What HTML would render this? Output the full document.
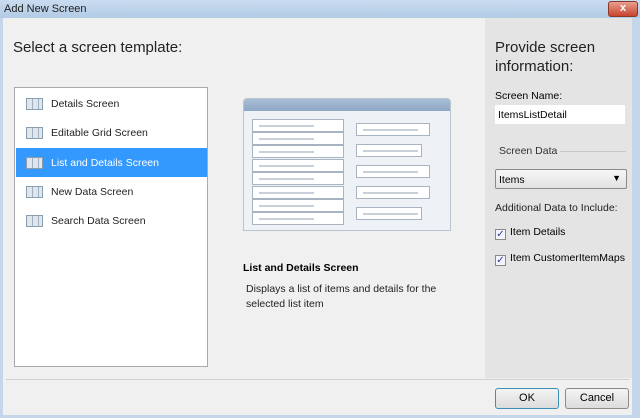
<!DOCTYPE html>
<html><head><style>
*{margin:0;padding:0;box-sizing:border-box}
body{width:640px;height:418px;overflow:hidden;font-family:"Liberation Sans",sans-serif;background:#c4d6ea;position:relative;font-size:10.5px;color:#000}
.abs{position:absolute}
.title{left:0;top:0;width:640px;height:18px;background:linear-gradient(#c9dcf0,#b3cbe6);font-size:11px;padding:3px 4px;color:#1e1e1e}
.close{left:608px;top:1px;width:30px;height:16px;border-radius:3px;background:linear-gradient(#e8a08e,#c8442e);border:1px solid #8a3a2a;color:#fff;font-weight:bold;text-align:center;font-size:11px;line-height:13px}
.main{left:3px;top:18px;width:629px;height:397px;background:#f0f0f0}
.right{left:485px;top:18px;width:147px;height:360px;background:#e4e4e4}
.list{left:14px;top:87px;width:194px;height:280px;background:#fff;border:1px solid #a9a9a9}
.item{position:absolute;left:1px;width:191px;height:29px;line-height:31px;padding-left:35px;font-size:10.5px;color:#222}
.item i{position:absolute;left:10px;top:9px;width:17px;height:12px;border:1px solid #8a9cb0;background:repeating-linear-gradient(90deg,#dfe6ee 0 5px,#9fb0c2 5px 6px),#dfe6ee}
.sel{background:#3399ff;color:#fff}
.chk{display:inline-block;width:11px;height:11px;border:1px solid #8a8a8a;background:#f4f4ff;vertical-align:-2px;margin-right:4px;font-size:10px;line-height:9px;color:#2a3a9a;text-align:center}
.btn{height:21px;border:1px solid #8a8a8a;border-radius:3px;background:linear-gradient(#f4f4f4,#dcdcdc);text-align:center;line-height:19px;font-size:11px}
.row{position:absolute;left:8px;width:92px;height:13px;border:1px solid #a8b4c2;background:#fff}
.row::after{content:"";position:absolute;left:6px;top:5px;width:55px;height:2px;background:#c8d0da}
</style></head><body>
<div class="abs title">Add New Screen</div>
<div class="abs close">x</div>
<div class="abs main"></div>
<div class="abs right"></div>
<div class="abs" style="left:13px;top:39px;font-size:15px;color:#222">Select a screen template:</div>
<div class="abs list">
<div class="item" style="top:1px"><i></i>Details Screen</div>
<div class="item" style="top:30px"><i></i>Editable Grid Screen</div>
<div class="item sel" style="top:60px"><i></i>List and Details Screen</div>
<div class="item" style="top:89px"><i></i>New Data Screen</div>
<div class="item" style="top:118px"><i></i>Search Data Screen</div>
</div>
<div class="abs" style="left:243px;top:98px;width:208px;height:133px;background:#eef1f5;border:1px solid #b8c4d0;border-radius:4px 4px 0 0;overflow:hidden">
<div style="height:12px;background:linear-gradient(#a8bed6,#8ea8c6)"></div>
<div class="row" style="top:20px"></div><div class="row" style="top:33px"></div><div class="row" style="top:46px"></div><div class="row" style="top:60px"></div><div class="row" style="top:73px"></div><div class="row" style="top:87px"></div><div class="row" style="top:100px"></div><div class="row" style="top:113px"></div>
<div class="row" style="left:112px;top:24px;width:74px"></div>
<div class="row" style="left:112px;top:45px;width:66px"></div>
<div class="row" style="left:112px;top:66px;width:74px"></div>
<div class="row" style="left:112px;top:87px;width:74px"></div>
<div class="row" style="left:112px;top:108px;width:66px"></div>
</div>
<div class="abs" style="left:243px;top:262px;font-weight:bold;font-size:10.5px">List and Details Screen</div>
<div class="abs" style="left:246px;top:282px;font-size:10.5px;line-height:15px;color:#222;width:200px">Displays a list of items and details for the selected list item</div>
<div class="abs" style="left:495px;top:38px;font-size:15px;line-height:19px;color:#222">Provide screen<br>information:</div>
<div class="abs" style="left:495px;top:90px;font-size:10.5px">Screen Name:</div>
<div class="abs" style="left:495px;top:105px;width:130px;height:19px;background:#fff;padding:4px 3px;font-size:10.5px">ItemsListDetail</div>
<div class="abs" style="left:499px;top:145px;font-size:10.5px;color:#333">Screen Data</div>
<div class="abs" style="left:560px;top:151px;width:66px;height:1px;background:#c8c8c8"></div>
<div class="abs" style="left:495px;top:169px;width:132px;height:20px;border:1px solid #8a8a8a;border-radius:2px;background:linear-gradient(#f6f6f6,#e2e2e2);padding:4px 3px;font-size:10.5px">Items<span style="position:absolute;right:5px;top:3px;font-size:9px">▼</span></div>
<div class="abs" style="left:495px;top:202px;font-size:10.5px;color:#222">Additional Data to Include:</div>
<div class="abs" style="left:495px;top:226px;font-size:10.5px"><span class="chk">✓</span>Item Details</div>
<div class="abs" style="left:495px;top:252px;font-size:10.5px"><span class="chk">✓</span>Item CustomerItemMaps</div>
<div class="abs" style="left:6px;top:379px;width:624px;height:1px;background:#d0d0d0"></div>
<div class="abs btn" style="left:495px;top:388px;width:64px;border-color:#3c8fb6">OK</div>
<div class="abs btn" style="left:565px;top:388px;width:64px">Cancel</div>
</body></html>
